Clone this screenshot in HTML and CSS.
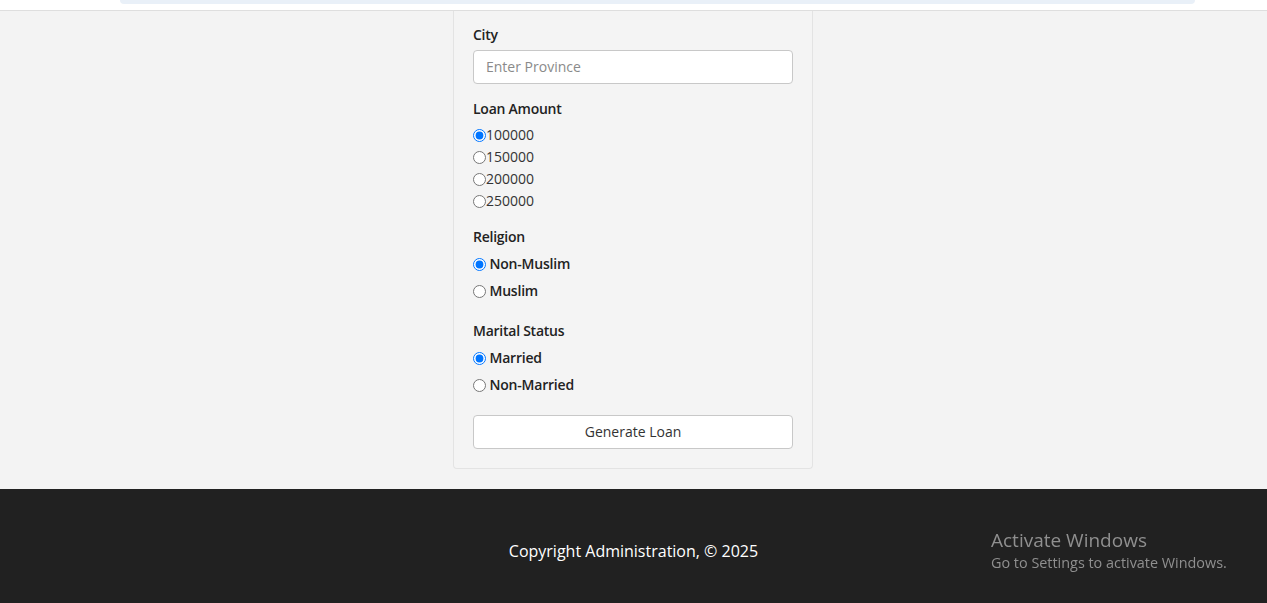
FILE: index.html
```html
<!DOCTYPE html>
<html lang="en">
<head>
<meta charset="utf-8">
<title>Loan</title>
<link rel="stylesheet" href="styles.css">
</head>
<body>
<header class="topbar">
  <div class="topbar-pill"></div>
</header>
<main class="main">
  <form class="card">
    <div class="group">
      <label class="label">City</label>
      <input class="field" type="text" placeholder="Enter Province">
    </div>
    <div class="group">
      <label class="label">Loan Amount</label>
      <div class="amount"><input type="radio" name="amt" checked>100000</div>
      <div class="amount"><input type="radio" name="amt">150000</div>
      <div class="amount"><input type="radio" name="amt">200000</div>
      <div class="amount"><input type="radio" name="amt">250000</div>
    </div>
    <div class="group group-choices">
      <label class="label">Religion</label>
      <div class="choice"><input type="radio" name="rel" checked> Non-Muslim</div>
      <div class="choice"><input type="radio" name="rel"> Muslim</div>
    </div>
    <div class="group group-choices">
      <label class="label">Marital Status</label>
      <div class="choice"><input type="radio" name="mar" checked> Married</div>
      <div class="choice"><input type="radio" name="mar"> Non-Married</div>
    </div>
    <button class="btn" type="button">Generate Loan</button>
  </form>
</main>
<footer class="footer">
  <p class="copy">Copyright Administration, © 2025</p>
</footer>
<div class="activate">
  <div class="activate-title">Activate Windows</div>
  <div class="activate-sub">Go to Settings to activate Windows.</div>
</div>
</body>
</html>
```
FILE: styles.css
```css
* { box-sizing: border-box; }
html, body { margin: 0; padding: 0; }
body {
  font-family: "Open Sans", "Noto Sans", sans-serif;
  font-size: 14px;
  line-height: 20px;
  color: #222;
  background: #f3f3f3;
  overflow: hidden;
  height: 603px;
}
.topbar {
  height: 11px;
  background: #fff;
  border-bottom: 1px solid #dedede;
  padding: 0 72px 0 120px;
}
.topbar-pill {
  height: 4px;
  background: #e9f0f8;
  border-radius: 0 0 8px 8px;
}
.main {
  display: flex;
  justify-content: center;
  padding-bottom: 20px;
  padding-right: 1px;
}
.card {
  width: 360px;
  margin: 0;
  background: #f4f4f4;
  border: 1px solid #e3e3e3;
  border-top: none;
  border-radius: 0 0 4px 4px;
  padding: 14px 19px 19px;
}
.group { margin-bottom: 15px; }
.group-choices { margin-bottom: 18px; }
.label {
  display: block;
  font-weight: 600;
  letter-spacing: -0.25px;
  margin-bottom: 5px;
  color: #222;
}
.field {
  display: block;
  width: 100%;
  height: 34px;
  border: 1px solid #c8c8c8;
  border-radius: 4px;
  background: #fff;
  padding: 5px 12px 7px;
  font: inherit;
  color: #555;
}
.field::placeholder { color: #8a8a8a; }
.amount {
  display: flex;
  align-items: center;
  height: 22px;
  color: #333;
}
.amount input, .choice input {
  width: 13px;
  height: 13px;
  margin: 0;
}
.choice {
  display: flex;
  align-items: center;
  height: 24px;
  margin-bottom: 3px;
  font-weight: 600;
  letter-spacing: -0.2px;
  white-space: pre;
  color: #222;
}
.choice:last-child { margin-bottom: 0; }
.btn {
  display: block;
  width: 100%;
  height: 34px;
  background: #fff;
  border: 1px solid #c8c8c8;
  border-radius: 4px;
  font: inherit;
  color: #333;
  cursor: pointer;
}
.footer {
  background: #212121;
  padding: 50px 0;
}
.copy {
  margin: 0;
  text-align: center;
  color: #fff;
  font-size: 16px;
  line-height: 24px;
}
.activate {
  position: fixed;
  left: 991px;
  top: 528px;
  color: #8f8f8f;
  font-family: "Open Sans", "Noto Sans", sans-serif;
  pointer-events: none;
}
.activate-title { font-size: 19px; line-height: 24px; }
.activate-sub { font-size: 14.4px; line-height: 22px; }
```
